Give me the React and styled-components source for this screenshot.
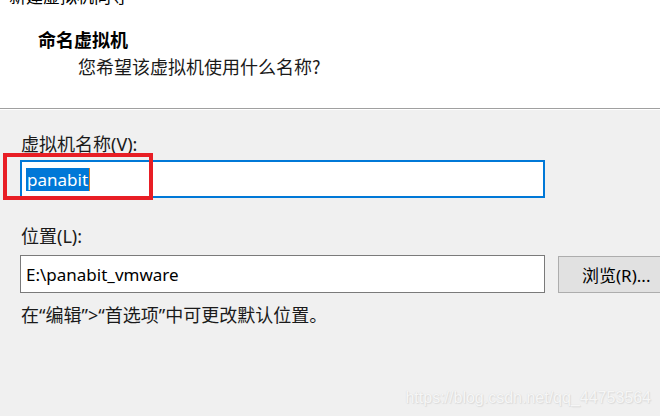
import React from 'react';
import styled, { createGlobalStyle } from 'styled-components';

const GlobalStyle = createGlobalStyle`
  html, body {
    margin: 0;
    padding: 0;
    background: #f0f0f0;
  }
  body {
    font-family: "Segoe UI", "Noto Sans", "Noto Sans CJK SC", sans-serif;
  }
`;

const Window = styled.div`
  position: relative;
  width: 660px;
  height: 416px;
  overflow: hidden;
  background: #f0f0f0;
  color: #000;
`;

const Header = styled.div`
  background: #fff;
  height: 108px;
  border-bottom: 1px solid #a0a0a0;
  box-shadow: 0 1px 0 #fff;
  overflow: hidden;
`;

const WindowTitle = styled.div`
  margin: -14px 0 0 9px;
  height: 20px;
  font-family: "Noto Sans CJK SC", sans-serif;
  font-size: 17px;
  line-height: 20px;
`;

const Heading = styled.h1`
  margin: 21px 0 0 38px;
  font-family: "Noto Sans CJK SC", sans-serif;
  font-size: 18px;
  font-weight: 700;
  line-height: 24px;
`;

const SubHeading = styled.p`
  margin: 3px 0 0 78px;
  font-family: "Noto Sans CJK SC", sans-serif;
  font-size: 18px;
  line-height: 24px;
  color: #1a1a1a;
`;

const Body = styled.div`
  padding: 24px 0 0 20px;
  display: flex;
  flex-direction: column;
`;

const Label = styled.label`
  display: block;
  font-family: "Noto Sans", "Noto Sans CJK SC", sans-serif;
  font-size: 18px;
  line-height: 22px;
  color: #1a1a1a;
  margin: ${p => p.top}px 0 ${p => p.gap}px 1px;
`;

const Row = styled.div`
  display: flex;
  align-items: center;
  gap: 13px;
`;

const Field = styled.div`
  position: relative;
  flex-shrink: 0;
  box-sizing: border-box;
  width: 525px;
  height: ${p => p.h}px;
  background: #fff;
  border: ${p => (p.focused ? '2px solid #0078d7' : '1px solid #7a7a7a')};
  display: flex;
  align-items: center;
  padding-left: ${p => (p.focused ? 4 : 5)}px;
  font-family: "Noto Sans", "Open Sans", sans-serif;
  font-size: 17px;
`;

const Selected = styled.span`
  background: #0078d7;
  color: #fff;
  padding: 0 1px;
  line-height: 23px;
  border-right: 1px solid #e08020;
`;

const Browse = styled.button`
  flex-shrink: 0;
  box-sizing: border-box;
  width: 110px;
  height: 37px;
  background: #e1e1e1;
  border: 1px solid #adadad;
  padding: 0 0 0 23px;
  text-align: left;
  font-family: "Noto Sans", "Noto Sans CJK SC", sans-serif;
  font-size: 17px;
  color: #000;
  white-space: nowrap;
`;

const Hint = styled.p`
  margin: 10px 0 0 1px;
  font-family: "Noto Sans CJK SC", sans-serif;
  font-size: 18px;
  line-height: 22px;
  color: #1a1a1a;
`;

const Quote = styled.span`
  font-family: "Noto Sans", sans-serif;
`;

const Annotation = styled.div`
  position: absolute;
  left: 3px;
  top: 153px;
  width: 150px;
  height: 47px;
  box-sizing: border-box;
  border: 4px solid #e81e25;
  pointer-events: none;
`;

const Watermark = styled.div`
  position: absolute;
  right: 9px;
  bottom: 9px;
  font-family: "Liberation Sans", Arial, sans-serif;
  font-size: 16px;
  color: #f6f6f6;
  text-shadow: 0 0 1px #d4d4d4, 1px 1px 1px #dcdcdc;
`;

export default function App() {
  return (
    <>
      <GlobalStyle />
      <Window>
        <Header>
          <WindowTitle>新建虚拟机向导</WindowTitle>
          <Heading>命名虚拟机</Heading>
          <SubHeading>您希望该虚拟机使用什么名称?</SubHeading>
        </Header>
        <Body>
          <Label top={0} gap={5}>虚拟机名称(V):</Label>
          <Field h={38} focused>
            <Selected>panabit</Selected>
          </Field>
          <Label top={27} gap={8}>位置(L):</Label>
          <Row>
            <Field h={38}>E:\panabit_vmware</Field>
            <Browse>浏览(R)...</Browse>
          </Row>
          <Hint>
            在<Quote>“</Quote>编辑<Quote>”&gt;“</Quote>首选项<Quote>”</Quote>中可更改默认位置。
          </Hint>
        </Body>
        <Annotation />
        <Watermark>https://blog.csdn.net/qq_44753564</Watermark>
      </Window>
    </>
  );
}
